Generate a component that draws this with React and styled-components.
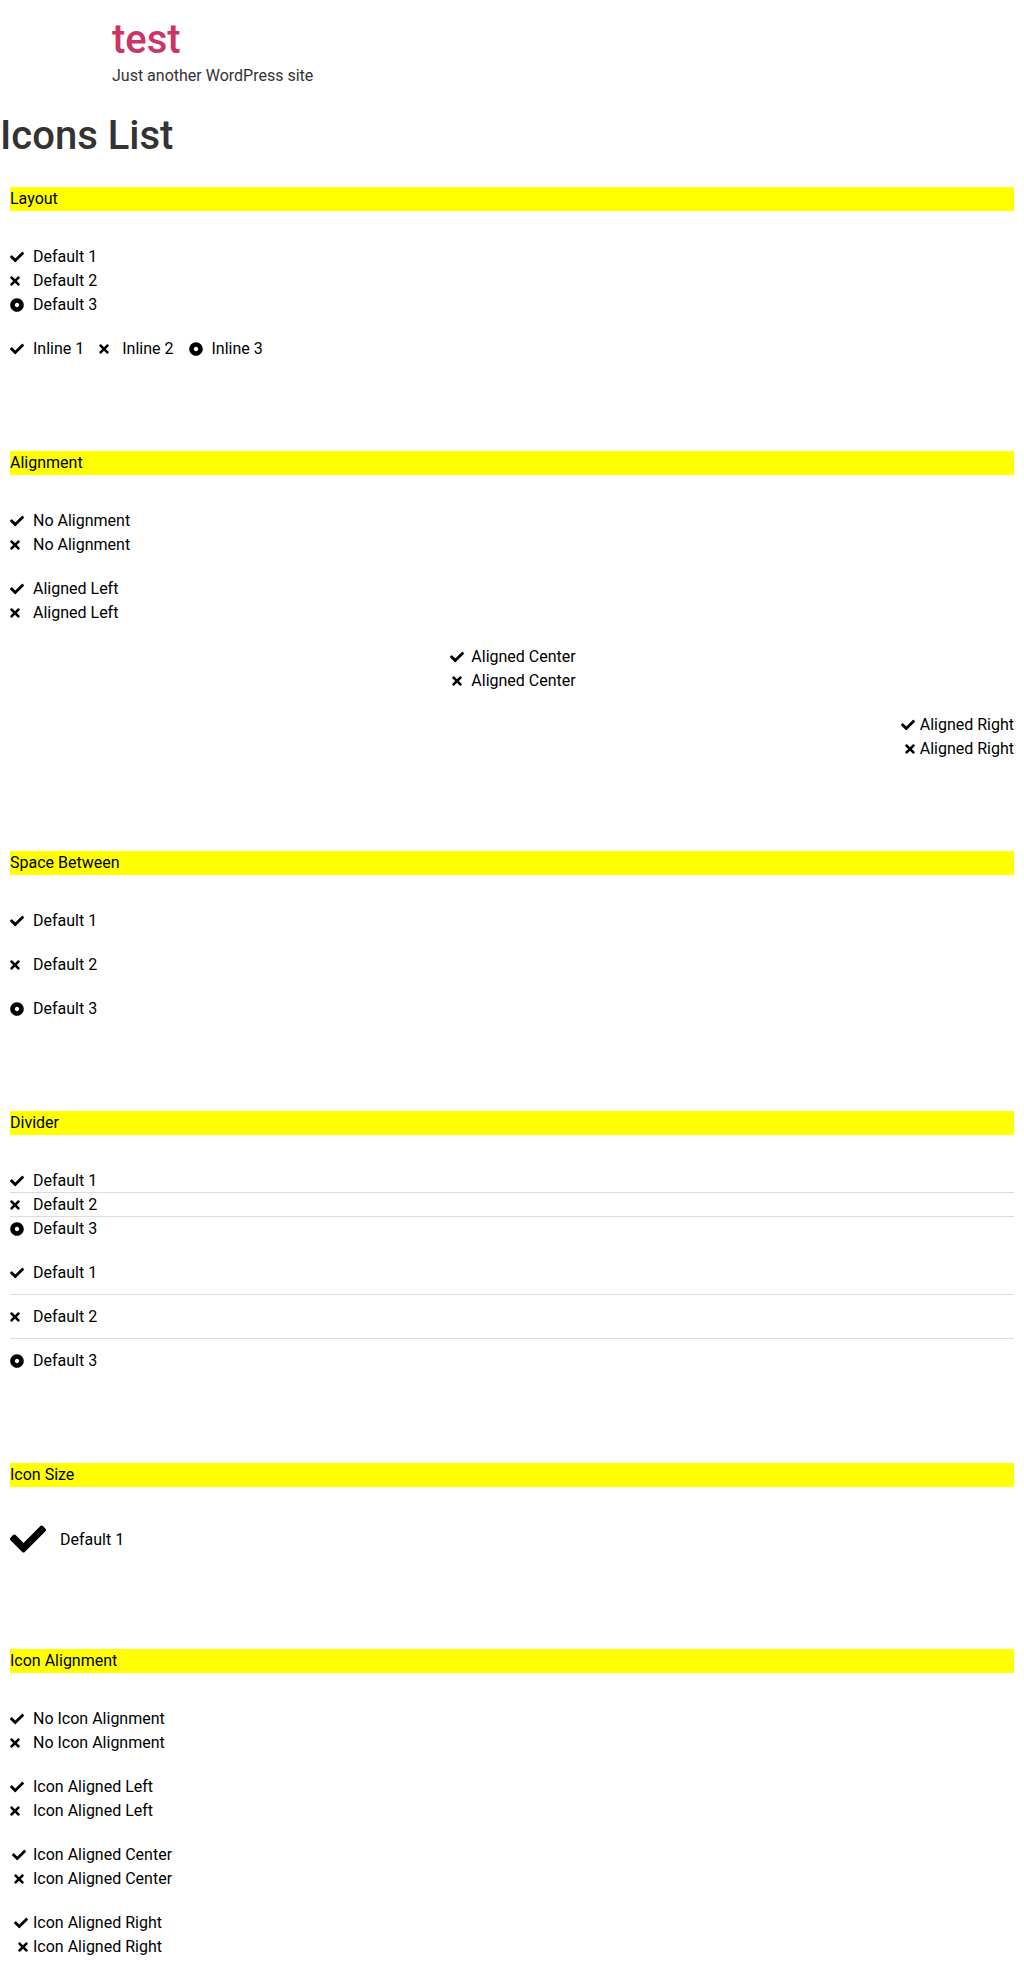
import React from "react";
import styled, { createGlobalStyle, css } from "styled-components";

const GlobalStyle = createGlobalStyle`
  *, *::before, *::after { box-sizing: border-box; }
  body {
    margin: 0;
    background: #fff;
    color: #333;
    font-family: Roboto, "Liberation Sans", sans-serif;
    font-size: 16px;
    line-height: 24px;
  }
`;

const Header = styled.header`
  max-width: 800px;
  margin: 0 auto;
  padding: 16px 0;
`;

const SiteTitle = styled.h1`
  margin: 0;
  font-size: 40px;
  font-weight: 500;
  line-height: 48px;
`;

const SiteLink = styled.a`
  color: #cc3366;
  text-decoration: none;
`;

const Tagline = styled.p`
  margin: 0;
`;

const PageTitle = styled.h1`
  margin: 8px 0 17px;
  font-size: 40px;
  font-weight: 500;
  line-height: 48px;
`;

const Section = styled.section`
  display: flex;
  flex-direction: column;
  gap: 20px;
  padding: 10px 10px 80px;
  color: #000;
`;

const SectionTitle = styled.p`
  margin: 0 0 14px;
  background: #ffff00;
`;

const flexAlign = { left: "flex-start", center: "center", right: "flex-end" };

const List = styled.ul`
  display: flex;
  flex-direction: ${(p) => (p.$inline ? "row" : "column")};
  flex-wrap: wrap;
  column-gap: 15px;
  row-gap: ${(p) => (p.$spaced ? 10 : 0)}px;
  margin: 0;
  padding: 0;
  list-style: none;
`;

const Item = styled.li`
  display: flex;
  align-items: center;
  justify-content: ${(p) => flexAlign[p.$align]};

  ${(p) =>
    p.$spaced &&
    css`
      &:not(:last-child) {
        padding-bottom: 10px;
      }
    `}

  ${(p) =>
    p.$divided &&
    css`
      &:not(:last-child) {
        box-shadow: inset 0 -1px 0 #ddd;
      }
    `}
`;

const IconBox = styled.span`
  display: flex;
  justify-content: ${(p) => flexAlign[p.$align]};
  width: ${(p) => (p.$large ? 45 : 18)}px;
  padding-bottom: ${(p) => (p.$large ? 2 : 0)}px;
`;

const Glyph = styled.svg`
  display: block;
  flex: none;
  width: ${(p) => (p.$large ? 36 : p.$narrow ? 10 : 14)}px;
  height: ${(p) => (p.$large ? 36 : 14)}px;
  fill: currentColor;
`;

const Label = styled.span`
  padding-left: 5px;
`;

const icons = [
  {
    width: 512,
    path: "M173.898 439.404l-166.4-166.4c-9.997-9.997-9.997-26.206 0-36.204l36.203-36.204c9.997-9.998 26.207-9.998 36.204 0L192 312.69 432.095 72.596c9.997-9.997 26.207-9.997 36.204 0l36.203 36.204c9.997 9.997 9.997 26.206 0 36.204l-294.4 294.401c-9.998 9.997-26.207 9.997-36.204-.001z",
  },
  {
    width: 352,
    path: "M242.72 256l100.07-100.07c12.28-12.28 12.28-32.19 0-44.48l-22.24-22.24c-12.28-12.28-32.19-12.28-44.48 0L176 189.28 75.93 89.21c-12.28-12.28-32.19-12.28-44.48 0L9.21 111.45c-12.28 12.28-12.28 32.19 0 44.48L109.28 256 9.21 356.07c-12.28 12.28-12.28 32.19 0 44.48l22.24 22.24c12.28 12.28 32.2 12.28 44.48 0L176 322.72l100.07 100.07c12.28 12.28 32.2 12.28 44.48 0l22.24-22.24c12.28-12.28 12.28-32.19 0-44.48L242.72 256z",
  },
  {
    width: 512,
    path: "M256 8C119.033 8 8 119.033 8 256s111.033 248 248 248 248-111.033 248-248S392.967 8 256 8zm80 248c0 44.112-35.888 80-80 80s-80-35.888-80-80 35.888-80 80-80 80 35.888 80 80z",
  },
];

function IconList({ items, inline, spaced, divided, large, align = "left", iconAlign = align }) {
  return (
    <List $inline={inline} $spaced={spaced}>
      {items.map((text, i) => {
        const { width, path } = icons[i];
        return (
          <Item key={i} $align={align} $spaced={spaced} $divided={divided}>
            <IconBox $align={iconAlign} $large={large}>
              <Glyph
                viewBox={`0 0 ${width} 512`}
                $narrow={width < 512}
                $large={large}
                aria-hidden="true"
              >
                <path d={path} />
              </Glyph>
            </IconBox>
            <Label>{text}</Label>
          </Item>
        );
      })}
    </List>
  );
}

const defaults = ["Default 1", "Default 2", "Default 3"];
const pair = (text) => [text, text];

const sections = [
  {
    title: "Layout",
    lists: [{ items: defaults }, { items: ["Inline 1", "Inline 2", "Inline 3"], inline: true }],
  },
  {
    title: "Alignment",
    lists: [
      { items: pair("No Alignment") },
      { items: pair("Aligned Left"), align: "left" },
      { items: pair("Aligned Center"), align: "center" },
      { items: pair("Aligned Right"), align: "right" },
    ],
  },
  { title: "Space Between", lists: [{ items: defaults, spaced: true }] },
  {
    title: "Divider",
    lists: [
      { items: defaults, divided: true },
      { items: defaults, divided: true, spaced: true },
    ],
  },
  { title: "Icon Size", lists: [{ items: ["Default 1"], large: true }] },
  {
    title: "Icon Alignment",
    lists: [
      { items: pair("No Icon Alignment") },
      { items: pair("Icon Aligned Left"), iconAlign: "left" },
      { items: pair("Icon Aligned Center"), iconAlign: "center" },
      { items: pair("Icon Aligned Right"), iconAlign: "right" },
    ],
  },
];

const Main = styled.main`
  ${Section}:last-child {
    padding-bottom: 10px;
  }
`;

export default function App() {
  return (
    <>
      <GlobalStyle />
      <Header>
        <SiteTitle>
          <SiteLink href="#">test</SiteLink>
        </SiteTitle>
        <Tagline>Just another WordPress site</Tagline>
      </Header>
      <Main>
        <PageTitle>Icons List</PageTitle>
        {sections.map(({ title, lists }) => (
          <Section key={title}>
            <SectionTitle>{title}</SectionTitle>
            {lists.map((list, i) => (
              <IconList key={i} {...list} />
            ))}
          </Section>
        ))}
      </Main>
    </>
  );
}
